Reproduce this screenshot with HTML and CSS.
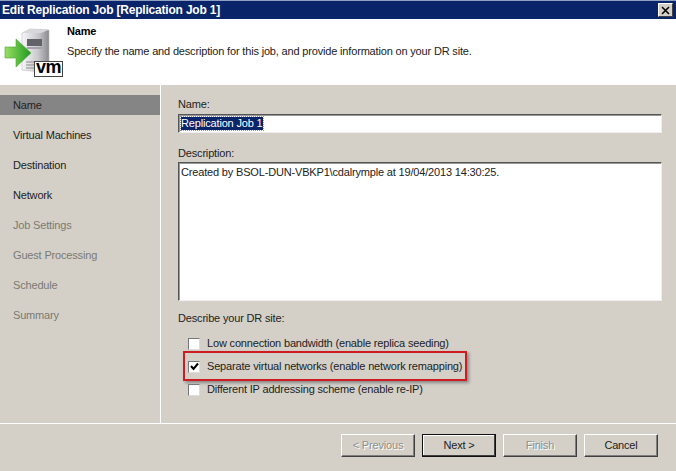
FILE: index.html
```html
<!DOCTYPE html>
<html lang="en">
<head>
<meta charset="utf-8">
<title>Edit Replication Job</title>
<link rel="stylesheet" href="styles.css">
</head>
<body>
<div class="window">
  <div class="titlebar">
    <span class="title">Edit Replication Job [Replication Job 1]</span>
    <span class="close"><svg width="9" height="9" viewBox="0 0 9 9"><path d="M1 1l7 7M8 1l-7 7" stroke="#000" stroke-width="1.6" fill="none"/></svg></span>
  </div>
  <div class="header">
    <div class="logo">
      <svg width="67" height="66" viewBox="0 19 67 66">
        <defs>
          <linearGradient id="srv" x1="0" x2="1" y1="0" y2="0"><stop offset="0" stop-color="#f6f6f8"/><stop offset=".6" stop-color="#c8c8cc"/><stop offset="1" stop-color="#8a8a8e"/></linearGradient>
          <linearGradient id="arr" x1="0" x2="1" y1="0" y2="0"><stop offset="0" stop-color="#9ade62"/><stop offset="1" stop-color="#1d9a20"/></linearGradient>
        </defs>
        <path d="M22 33l8-4 19 1v38l-9 4-18-2z" fill="url(#srv)" stroke="#b8b8bc" stroke-width=".6"/>
        <path d="M23 33l7-4 18 1-7 3z" fill="#d8d8dc"/>
        <rect x="27" y="39" width="15" height="7" fill="#62626a"/>
        <rect x="27" y="47" width="15" height="2" fill="#a2a2a8"/>
        <path d="M26 62h8M26 65h8M26 68h8" stroke="#8a8a90"/>
        <path d="M5 47h11v-8l15 14-15 14v-9H5z" fill="url(#arr)" stroke="#4aa534" stroke-width=".6"/>
      </svg>
      <span class="badge">vm</span>
    </div>
    <div class="heading">
      <div class="heading-title">Name</div>
      <div class="heading-text">Specify the name and description for this job, and provide information on your DR site.</div>
    </div>
  </div>
  <div class="main">
    <nav class="steps">
      <div class="step active">Name</div>
      <div class="step">Virtual Machines</div>
      <div class="step">Destination</div>
      <div class="step">Network</div>
      <div class="step off">Job Settings</div>
      <div class="step off">Guest Processing</div>
      <div class="step off">Schedule</div>
      <div class="step off">Summary</div>
    </nav>
    <section class="form">
      <div class="label">Name:</div>
      <div class="field name-field"><span class="selected">Replication Job 1</span></div>
      <div class="label desc-label">Description:</div>
      <div class="field desc-field">Created by BSOL-DUN-VBKP1\cdalrymple at 19/04/2013 14:30:25.</div>
      <div class="label site-label">Describe your DR site:</div>
      <div class="options">
        <div class="option"><span class="check"></span><span>Low connection bandwidth (enable replica seeding)</span></div>
        <div class="option marked"><span class="check"><svg width="9" height="9" viewBox="0 0 9 9"><path d="M1 4l2.5 3L8 1.5" stroke="#000" stroke-width="2" fill="none"/></svg></span><span>Separate virtual networks (enable network remapping)</span></div>
        <div class="option"><span class="check"></span><span>Different IP addressing scheme (enable re-IP)</span></div>
      </div>
    </section>
  </div>
  <div class="footer">
    <div class="btn disabled">&lt; Previous</div>
    <div class="btn default">Next &gt;</div>
    <div class="btn disabled">Finish</div>
    <div class="btn">Cancel</div>
  </div>
</div>
</body>
</html>
```
FILE: styles.css
```css
* { box-sizing: border-box; }
html, body { margin: 0; padding: 0; }
body { width: 676px; height: 471px; overflow: hidden; background: #d4d0c8; font-family: "Liberation Sans", Arial, sans-serif; font-size: 11px; letter-spacing: -.17px; color: #222; }
.window { width: 676px; height: 471px; display: flex; flex-direction: column; }
.titlebar { height: 19px; flex: none; background: #0a246a; border-top: 1px solid #8fa0c0; display: flex; align-items: center; justify-content: space-between; padding: 0 3px 0 2px; }
.title { color: #fff; font-weight: bold; font-size: 12px; letter-spacing: -.2px; }
.close { width: 15px; height: 14px; background: #d4d0c8; border: 1px solid; border-color: #fff #404040 #404040 #fff; display: flex; align-items: center; justify-content: center; }
.header { height: 66px; flex: none; background: #fff; display: flex; }
.logo { width: 67px; flex: none; position: relative; }
.logo svg { display: block; }
.badge { position: absolute; left: 34px; top: 42px; width: 29px; height: 16px; background: #fff; border: 1px solid #444; font-weight: bold; font-size: 18px; line-height: 11px; text-align: center; letter-spacing: -.5px; color: #000; }
.heading-title { font-weight: bold; margin-top: 6px; line-height: 13px; color: #000; }
.heading-text { margin-top: 6px; line-height: 14px; }
.main { height: 338px; flex: none; display: flex; }
.steps { width: 161px; flex: none; border-right: 1px solid #fff; padding-top: 10px; display: flex; flex-direction: column; gap: 10px; }
.step { height: 20px; line-height: 20px; padding-left: 13px; }
.step.active { background: #858585; }
.step.off { color: #7a7a74; }
.form { flex: 1; padding: 12px 14px 0 17px; }
.label { height: 14px; line-height: 14px; }
.field { background: #fff; border: 1px solid; border-color: #555 #eee #eee #555; box-shadow: inset 1px 1px 0 #999; padding: 2px; margin-top: 3px; }
.name-field { height: 19px; line-height: 13px; }
.selected { background: #0a246a; color: #fff; display: inline-block; height: 13px; outline: 1px dotted #999; }
.desc-label { margin-top: 13px; }
.desc-field { height: 139px; line-height: 14px; margin-top: 2px; }
.site-label { margin-top: 10px; }
.options { margin-top: 12px; padding-left: 10px; display: flex; flex-direction: column; gap: 10px; }
.option { height: 13px; display: flex; align-items: center; gap: 7px; line-height: 13px; white-space: nowrap; }
.check { width: 12px; height: 12px; flex: none; background: #fff; border: 1px solid; border-color: #777 #ddd #ddd #777; display: flex; align-items: center; justify-content: center; }
.marked { position: relative; margin-right: 198px; }
.marked::after { content: ""; position: absolute; left: -5px; right: -3px; top: -9px; bottom: -8px; border: 2px solid #cf1c22; box-shadow: 2px 2px 3px #888; pointer-events: none; }
.footer { flex: 1; border-top: 1px solid #fff; display: flex; justify-content: flex-end; gap: 7px; padding: 10px 18px 0 0; }
.btn { width: 74px; height: 23px; line-height: 20px; text-align: center; border: 1px solid; border-color: #fff #404040 #404040 #fff; box-shadow: inset -1px -1px 0 #808080; }
.btn.default { border-color: #111; box-shadow: inset -1px -1px 0 #404040, inset 1px 1px 0 #fff; }
.btn.disabled { color: #8f8f8a; text-shadow: 1px 1px 0 #fff; }
```
